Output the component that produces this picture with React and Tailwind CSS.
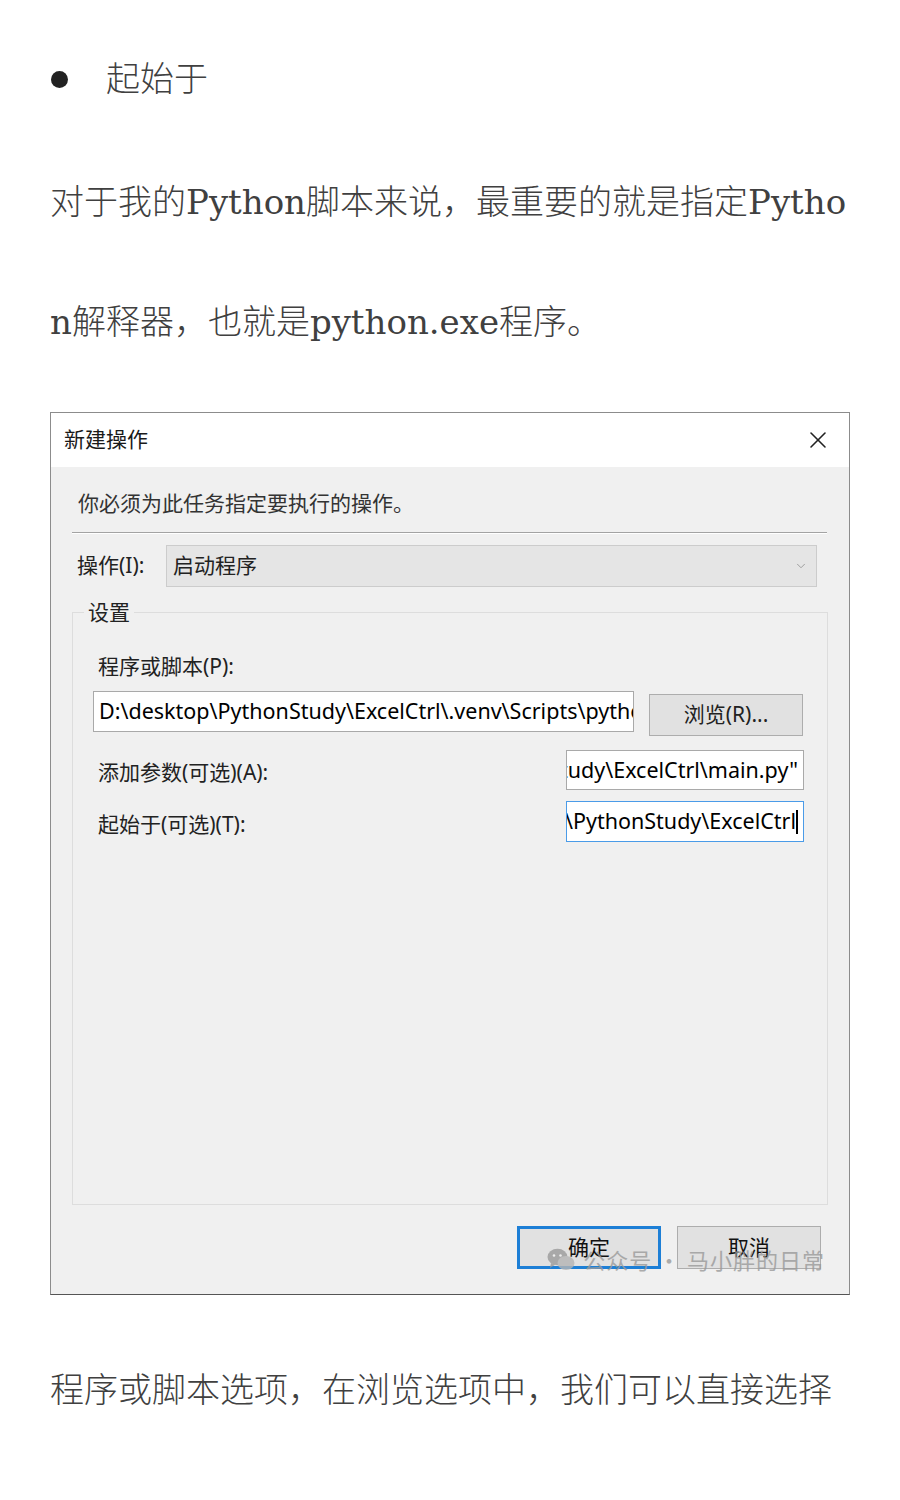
import { ChevronDown, X } from 'lucide-react';

const ARTICLE_FONT = { fontFamily: '"DejaVu Serif", "Noto Sans CJK SC", serif' };
const UI_FONT = { fontFamily: '"Noto Sans", "Noto Sans CJK SC", sans-serif' };

function WeChatMark() {
  return (
    <svg width="28" height="24" viewBox="0 0 28 24" fill="#9a9a9a">
      <ellipse cx="10.5" cy="9" rx="10" ry="8.2" />
      <path d="M4 15 L3 20 L8.5 16.5 Z" />
      <ellipse cx="19" cy="15" rx="8.5" ry="7" fill="#b5b5b5" />
      <circle cx="7" cy="7.5" r="1.3" fill="#f0f0f0" />
      <circle cx="13.5" cy="7.5" r="1.3" fill="#f0f0f0" />
    </svg>
  );
}

function TextBox({ value, align = 'left', focused = false, className = '' }) {
  return (
    <div
      className={`flex items-center overflow-hidden whitespace-nowrap bg-white border px-[5px] text-[21.5px] text-black ${
        align === 'right' ? 'justify-end' : 'justify-start'
      } ${focused ? 'border-[#4a9be8]' : 'border-[#a9a9a9]'} ${className}`}
    >
      <span className="shrink-0">{value}</span>
      {focused && <span className="shrink-0 w-[2px] h-[24px] bg-black" />}
    </div>
  );
}

function WinButton({ children, primary = false }) {
  return (
    <div
      className={`w-[144px] h-[43px] flex items-center justify-center bg-[#e1e1e1] text-[21px] text-[#111] ${
        primary ? 'border-[3px] border-[#1d7fd6]' : 'border border-[#adadad]'
      }`}
    >
      {children}
    </div>
  );
}

function NewActionDialog() {
  return (
    <div className="w-[800px] border border-[#8c8c8c] border-b-[#555] bg-[#f0f0f0] font-normal" style={UI_FONT}>
      {/* title bar */}
      <div className="h-[54px] bg-white flex items-center justify-between pl-[13px] pr-[17px]">
        <span className="text-[21px] text-[#1a1a1a]">新建操作</span>
        <X size={28} strokeWidth={1.3} className="text-[#222]" />
      </div>

      <div className="relative pl-[21px] pr-[22px] pb-[25px]">
        <p className="pt-[18px] pl-[6px] h-[54px] leading-[36px] text-[21px] text-[#333]">你必须为此任务指定要执行的操作。</p>
        <div className="mt-[11px] h-[2px] bg-[#a3a3a3] border-b border-white" />

        <div className="mt-[11px] flex items-center">
          <span className="w-[94px] pl-[5px] text-[21px] text-[#222]">操作(I):</span>
          <div className="w-[651px] h-[42px] bg-[#e5e5e5] border border-[#cccccc] flex items-center justify-between pl-[6px] pr-[8px]">
            <span className="text-[21px] text-[#222]">启动程序</span>
            <ChevronDown size={14} strokeWidth={1.6} className="text-[#999]" />
          </div>
        </div>

        <fieldset className="mt-[11px] w-[756px] h-[607px] border border-[#dddddd] pl-[20px] pr-[24px]">
          <legend className="-ml-[9px] px-[4px] h-[28px] leading-[28px] text-[21px] text-[#222]">设置</legend>

          <p className="mt-[26px] pl-[5px] h-[28px] leading-[28px] text-[21px] text-[#222]">程序或脚本(P):</p>
          <div className="mt-[11px] flex items-start gap-[15px]">
            <TextBox className="w-[541px] h-[41px]" value="D:\desktop\PythonStudy\ExcelCtrl\.venv\Scripts\python.exe" />
            <div className="mt-[3px] w-[154px] h-[42px] flex items-center justify-center bg-[#e1e1e1] border border-[#adadad] text-[21px] text-[#222]">
              浏览(R)...
            </div>
          </div>

          <div className="mt-[14px] flex items-center justify-between">
            <span className="pl-[5px] pt-[6px] text-[21px] text-[#222]">添加参数(可选)(A):</span>
            <TextBox className="w-[238px] h-[40px] -mr-[1px]" align="right" value={'"D:\\desktop\\PythonStudy\\ExcelCtrl\\main.py"'} />
          </div>
          <div className="mt-[11px] flex items-center justify-between">
            <span className="pl-[5px] pt-[6px] text-[21px] text-[#222]">起始于(可选)(T):</span>
            <TextBox className="w-[238px] h-[41px] -mr-[1px]" align="right" focused value="D:\desktop\PythonStudy\ExcelCtrl" />
          </div>
        </fieldset>

        <div className="mt-[21px] flex justify-end gap-[16px] pr-[6px]">
          <WinButton primary>确定</WinButton>
          <WinButton>取消</WinButton>
        </div>

        {/* watermark over the buttons */}
        <div className="absolute right-[24px] bottom-[18px] flex items-center gap-[8px] opacity-80 pointer-events-none">
          <WeChatMark />
          <span className="text-[22px] text-[#9a9a9a] tracking-[1px]" style={{ fontFamily: '"Noto Sans CJK SC", sans-serif' }}>
            公众号 · 马小胖的日常
          </span>
        </div>
      </div>
    </div>
  );
}

export default function App() {
  return (
    <div className="w-[900px] min-h-[1500px] bg-white px-[50px] text-[#404040] font-light" style={ARTICLE_FONT}>
      <div className="pt-[52px] h-[106px] flex items-center">
        <span className="w-[17px] h-[17px] rounded-full bg-[#222] ml-[1px]" />
        <span className="ml-[38px] text-[34px] leading-[56px]">起始于</span>
      </div>

      <div className="mt-[36px] text-[34px] leading-[120px]">
        <p className="whitespace-nowrap">对于我的Python脚本来说，最重要的就是指定Pytho</p>
        <p className="whitespace-nowrap">n解释器，也就是python.exe程序。</p>
      </div>

      <div className="mt-[30px]">
        <NewActionDialog />
      </div>

      <p className="mt-[35px] text-[34px] leading-[120px] whitespace-nowrap">
        程序或脚本选项，在浏览选项中，我们可以直接选择
      </p>
    </div>
  );
}
